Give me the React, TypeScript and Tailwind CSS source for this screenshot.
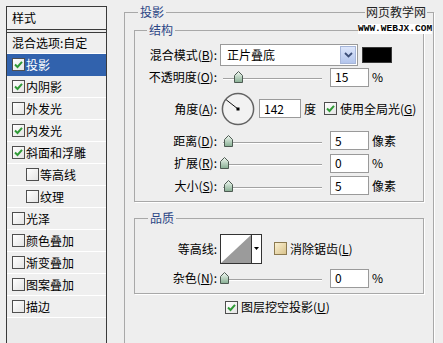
import React from 'react';

const styleItems = [
  { label: '投影', checked: true, selected: true },
  { label: '内阴影', checked: true },
  { label: '外发光', checked: false },
  { label: '内发光', checked: true },
  { label: '斜面和浮雕', checked: true },
  { label: '等高线', checked: false, indent: true },
  { label: '纹理', checked: false, indent: true },
  { label: '光泽', checked: false },
  { label: '颜色叠加', checked: false },
  { label: '渐变叠加', checked: false },
  { label: '图案叠加', checked: false },
  { label: '描边', checked: false },
];

const Check = ({ checked, beige }: { checked?: boolean; beige?: boolean }) => (
  <span
    className={
      beige
        ? 'flex h-[13px] w-[13px] shrink-0 items-center justify-center border border-[#8c7a50] bg-gradient-to-br from-[#fbf1d2] to-[#d9c38c]'
        : 'flex h-[13px] w-[13px] shrink-0 items-center justify-center border border-[#4f4f4f] bg-gradient-to-br from-white to-[#e4e4e4]'
    }
  >
    {checked && (
      <svg width="9" height="9" viewBox="0 0 9 9">
        <path d="M1 4.5 L3.5 7 L8 1.8" fill="none" stroke="#2f9a36" strokeWidth="2" />
      </svg>
    )}
  </span>
);

const Thumb = () => (
  <svg width="9" height="12" viewBox="0 0 9 12">
    <defs>
      <linearGradient id="tg" x1="0" y1="0" x2="0" y2="1">
        <stop offset="0" stopColor="#f4faf4" />
        <stop offset="1" stopColor="#86ae92" />
      </linearGradient>
    </defs>
    <path d="M0.5 4.5 L4.5 0.5 L8.5 4.5 V11.5 H0.5 Z" fill="url(#tg)" stroke="#4d5a52" />
  </svg>
);

const Slider = ({ thumbPos }: { thumbPos: string }) => (
  <div className="relative ml-[3px] h-[14px] w-[102px] shrink-0">
    <div className="absolute left-[3px] right-0 top-[8px] h-[2px] border-t border-b border-t-[#a2a2a2] border-b-white" />
    <div className={`absolute top-[1px] ${thumbPos}`}>
      <Thumb />
    </div>
  </div>
);

const NumBox = ({ value, className }: { value: string; className: string }) => (
  <div className={`flex h-[19px] shrink-0 items-center border border-[#9a9a9a] bg-white pl-[4px] ${className}`}>
    {value}
  </div>
);

const Label = ({ children }: { children: React.ReactNode }) => (
  <span className="w-[82px] shrink-0 text-right">{children}</span>
);

const SliderRow = ({
  label,
  thumbPos,
  value,
  unit,
  height,
}: {
  label: React.ReactNode;
  thumbPos: string;
  value: string;
  unit: string;
  height: string;
}) => (
  <div className={`flex items-center ${height}`}>
    <Label>{label}</Label>
    <Slider thumbPos={thumbPos} />
    <NumBox value={value} className="ml-[8px] w-[39px]" />
    <span className="ml-[3px]">{unit}</span>
  </div>
);

export default function App() {
  return (
    <div className="relative flex h-[343px] w-[443px] items-start overflow-hidden bg-[#eeeeee] font-['Noto_Sans_CJK_SC',sans-serif] text-[12px] leading-none text-black">
      {/* style list */}
      <div className="ml-[6px] mt-[6px] h-[345px] w-[101px] shrink-0 border border-[#3a3a3a] bg-[#ebebeb]">
        <div className="flex h-[23px] items-center border-b border-[#3a3a3a] bg-[#f0f0f0] pl-[5px]">样式</div>
        <div className="mt-[2px] border-t border-[#3a3a3a]">
          <div className="flex h-[21px] items-center border-b border-white bg-[#efefef] pl-[5px]">混合选项:自定</div>
          {styleItems.map((item) => (
            <div
              key={item.label}
              className={
                item.selected
                  ? 'flex h-[22px] items-center gap-[1px] border-b border-[#3162ad] bg-[#3162ad] pl-[5px] text-white'
                  : item.indent
                  ? 'flex h-[22px] items-center gap-[1px] border-b border-white bg-[#efefef] pl-[19px]'
                  : 'flex h-[22px] items-center gap-[1px] border-b border-white bg-[#efefef] pl-[5px]'
              }
            >
              <Check checked={item.checked} />
              <span>{item.label}</span>
            </div>
          ))}
        </div>
      </div>

      {/* drop shadow settings */}
      <fieldset className="ml-[17px] mt-[4px] h-[380px] w-[310px] shrink-0 border border-[#a8a8a8] px-[9px] shadow-[1px_1px_0_#fff]">
        <legend className="ml-[4px] px-[2px] leading-[16px] text-[#2b4585]">投影</legend>

        <fieldset className="mt-[2px] w-[290px] border border-[#a8a8a8] pb-[4px] shadow-[1px_1px_0_#fff]">
          <legend className="ml-[12px] px-[2px] leading-[16px] text-[#2b4585]">结构</legend>

          <div className="mt-[5px] flex h-[23px] items-center">
            <Label>
              混合模式(<u>B</u>):
            </Label>
            <div className="ml-[3px] flex h-[22px] w-[138px] shrink-0 items-center justify-between border border-[#9a9a9a] bg-white pl-[6px] pr-[1px]">
              <span>正片叠底</span>
              <span className="flex h-[18px] w-[16px] items-center justify-center border border-[#a6b6d9] bg-gradient-to-b from-[#dde6fb] to-[#b3c5ec]">
                <svg width="9" height="6" viewBox="0 0 9 6">
                  <path d="M1 1 L4.5 4.5 L8 1" fill="none" stroke="#3d4f78" strokeWidth="1.8" />
                </svg>
              </span>
            </div>
            <div className="ml-[4px] h-[16px] w-[30px] shrink-0 border border-[#3a3a3a] bg-black" />
          </div>

          <SliderRow
            height="h-[22px]"
            label={<>不透明度(<u>O</u>):</>}
            thumbPos="left-[14px]"
            value="15"
            unit="%"
          />

          <div className="flex h-[41px] items-center">
            <Label>
              角度(<u>A</u>):
            </Label>
            <svg className="ml-[4px] shrink-0" width="34" height="34" viewBox="0 0 34 34">
              <circle cx="17" cy="17" r="15.6" fill="#f2f2f2" stroke="#636363" strokeWidth="1.5" />
              <line x1="17" y1="17" x2="5.2" y2="7.8" stroke="#111" strokeWidth="1" />
              <rect x="15.5" y="15.5" width="3" height="3" fill="#000" />
            </svg>
            <NumBox value="142" className="ml-[4px] w-[42px]" />
            <span className="ml-[3px]">度</span>
            <span className="ml-[8px]">
              <Check checked />
            </span>
            <span className="ml-[3px]">
              使用全局光(<u>G</u>)
            </span>
          </div>

          <SliderRow
            height="h-[23px]"
            label={<>距离(<u>D</u>):</>}
            thumbPos="left-[4px]"
            value="5"
            unit="像素"
          />
          <SliderRow
            height="h-[22px]"
            label={<>扩展(<u>R</u>):</>}
            thumbPos="left-[0px]"
            value="0"
            unit="%"
          />
          <SliderRow
            height="h-[23px]"
            label={<>大小(<u>S</u>):</>}
            thumbPos="left-[4px]"
            value="5"
            unit="像素"
          />
        </fieldset>

        <fieldset className="mt-[8px] w-[290px] border border-[#a8a8a8] pb-[4px] shadow-[1px_1px_0_#fff]">
          <legend className="ml-[13px] px-[2px] leading-[16px] text-[#2b4585]">品质</legend>

          <div className="mt-[6px] flex h-[33px] items-center">
            <Label>等高线:</Label>
            <div className="ml-[3px] flex h-[30px] w-[42px] shrink-0 border border-[#333]">
              <svg width="30" height="28" viewBox="0 0 30 28" className="shrink-0 bg-white">
                <polygon points="0,28 30,0 30,28" fill="#9b9b9b" />
              </svg>
              <div className="flex flex-1 items-center justify-center border-l border-[#333] bg-white">
                <svg width="5" height="3" viewBox="0 0 5 3">
                  <polygon points="0,0 5,0 2.5,3" fill="#000" />
                </svg>
              </div>
            </div>
            <span className="ml-[12px]">
              <Check beige />
            </span>
            <span className="ml-[3px]">
              消除锯齿(<u>L</u>)
            </span>
          </div>

          <SliderRow
            height="mt-[2px] h-[22px]"
            label={<>杂色(<u>N</u>):</>}
            thumbPos="left-[0px]"
            value="0"
            unit="%"
          />
        </fieldset>

        <div className="ml-[91px] mt-[3px] flex h-[20px] items-center">
          <Check checked />
          <span className="ml-[3px]">
            图层挖空投影(<u>U</u>)
          </span>
        </div>
      </fieldset>

      {/* watermark */}
      <div className="absolute left-[365px] top-[5px] bg-[#eeeeee] px-[1px] leading-[14px] text-[#222]">网页教学网</div>
      <div className="absolute left-[358px] top-[24px] h-[10px] w-[74px] bg-white text-center font-['Liberation_Mono',monospace] text-[9.5px] font-bold leading-[10px] text-black">
        WWW.WEBJX.COM
      </div>
    </div>
  );
}
